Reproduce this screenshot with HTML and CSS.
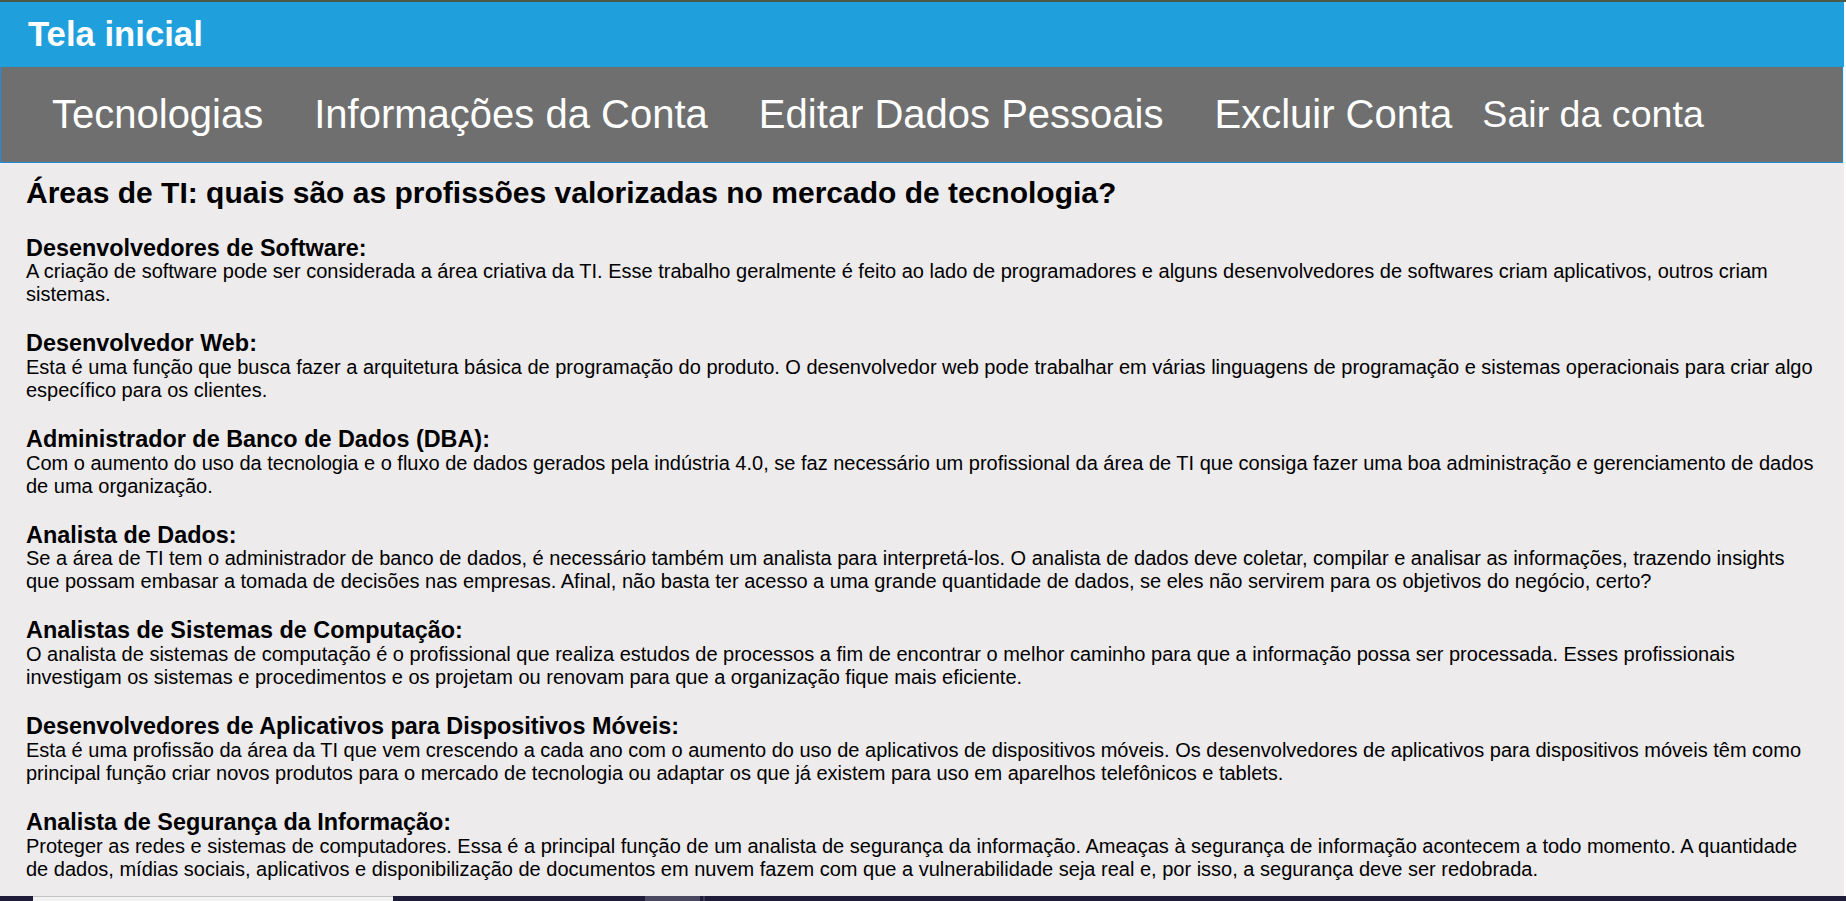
FILE: index.html
```html
<!DOCTYPE html>
<html lang="pt-BR">
<head>
<meta charset="utf-8">
<title>Tela inicial</title>
<link rel="stylesheet" href="styles.css">
</head>
<body>
<div class="window-edge"></div>
<div class="page">
  <header class="topbar">
    <h1 class="brand">Tela inicial</h1>
  </header>
  <nav class="menu">
    <ul class="menu-list">
      <li><a href="#">Tecnologias</a></li>
      <li><a href="#">Informações da Conta</a></li>
      <li><a href="#">Editar Dados Pessoais</a></li>
      <li><a href="#">Excluir Conta</a></li>
    </ul>
    <a class="logout" href="#">Sair da conta</a>
  </nav>
  <main class="content">
    <h2 class="page-title">Áreas de TI: quais são as profissões valorizadas no mercado de tecnologia?</h2>

    <section class="career">
      <h3>Desenvolvedores de Software:</h3>
      <p>A criação de software pode ser considerada a área criativa da TI. Esse trabalho geralmente é feito ao lado de programadores e alguns desenvolvedores de softwares criam aplicativos, outros criam sistemas.</p>
    </section>

    <section class="career">
      <h3>Desenvolvedor Web:</h3>
      <p>Esta é uma função que busca fazer a arquitetura básica de programação do produto. O desenvolvedor web pode trabalhar em várias linguagens de programação e sistemas operacionais para criar algo específico para os clientes.</p>
    </section>

    <section class="career">
      <h3>Administrador de Banco de Dados (DBA):</h3>
      <p>Com o aumento do uso da tecnologia e o fluxo de dados gerados pela indústria 4.0, se faz necessário um profissional da área de TI que consiga fazer uma boa administração e gerenciamento de dados de uma organização.</p>
    </section>

    <section class="career">
      <h3>Analista de Dados:</h3>
      <p>Se a área de TI tem o administrador de banco de dados, é necessário também um analista para interpretá-los. O analista de dados deve coletar, compilar e analisar as informações, trazendo insights que possam embasar a tomada de decisões nas empresas. Afinal, não basta ter acesso a uma grande quantidade de dados, se eles não servirem para os objetivos do negócio, certo?</p>
    </section>

    <section class="career">
      <h3>Analistas de Sistemas de Computação:</h3>
      <p>O analista de sistemas de computação é o profissional que realiza estudos de processos a fim de encontrar o melhor caminho para que a informação possa ser processada. Esses profissionais investigam os sistemas e procedimentos e os projetam ou renovam para que a organização fique mais eficiente.</p>
    </section>

    <section class="career">
      <h3>Desenvolvedores de Aplicativos para Dispositivos Móveis:</h3>
      <p>Esta é uma profissão da área da TI que vem crescendo a cada ano com o aumento do uso de aplicativos de dispositivos móveis. Os desenvolvedores de aplicativos para dispositivos móveis têm como principal função criar novos produtos para o mercado de tecnologia ou adaptar os que já existem para uso em aparelhos telefônicos e tablets.</p>
    </section>

    <section class="career">
      <h3>Analista de Segurança da Informação:</h3>
      <p>Proteger as redes e sistemas de computadores. Essa é a principal função de um analista de segurança da informação. Ameaças à segurança de informação acontecem a todo momento. A quantidade de dados, mídias sociais, aplicativos e disponibilização de documentos em nuvem fazem com que a vulnerabilidade seja real e, por isso, a segurança deve ser redobrada.</p>
    </section>
  </main>
</div>
<div class="taskbar">
  <span class="tb-start"></span>
  <span class="tb-search"></span>
  <span class="tb-gap"></span>
  <span class="tb-app"></span>
  <span class="tb-sep"></span>
</div>
</body>
</html>
```

FILE: styles.css
```css
html {
  background: #ffffff;
}

body {
  margin: 0;
  font-family: "Liberation Sans", Arial, sans-serif;
  color: #000;
}

.window-edge {
  height: 2px;
  background: #4b5a4b;
}

.page {
  margin-right: 2px;
  background: #edebec;
  min-height: calc(100vh - 2px);
}

.topbar {
  height: 65px;
  display: flex;
  align-items: center;
  padding-left: 28px;
  background: #1fa0dd;
}

.brand {
  margin: 0;
  font-size: 34.7px;
  font-weight: bold;
  color: #fff;
}

.menu {
  display: flex;
  align-items: center;
  height: 95px;
  padding-left: 51px;
  background: #6f6f6f;
  border: 1px solid #1f8fdb;
  border-top: 0;
  margin-right: 1px;
}

.menu-list {
  display: flex;
  gap: 51px;
  margin: 0;
  padding: 0;
  list-style: none;
}

.menu a {
  color: #fff;
  text-decoration: none;
  font-size: 40px;
}

.menu .logout {
  margin-left: 30px;
  font-size: 37.6px;
}

.content {
  padding: 13px 29px 0 26px;
}

.page-title {
  margin: 0 0 25.6px;
  font-size: 30px;
  font-weight: bold;
}

.career + .career {
  margin-top: 25px;
}

.career h3 {
  margin: 0;
  font-size: 23.4px;
  line-height: 24.7px;
  font-weight: bold;
}

.career p {
  margin: 0;
  font-size: 20px;
}

.taskbar {
  position: fixed;
  left: 0;
  right: 0;
  bottom: 0;
  height: 5px;
  display: flex;
  background: #1f1c3a;
}

.tb-start {
  width: 33px;
}

.tb-search {
  width: 360px;
  background: #f2f2f2;
  border-top: 1px solid #c4c4c4;
}

.tb-gap {
  width: 252px;
}

.tb-app {
  width: 55px;
  background: #4a4760;
}

.tb-sep {
  width: 2px;
  margin-left: 3px;
  background: #3a3852;
}
```
